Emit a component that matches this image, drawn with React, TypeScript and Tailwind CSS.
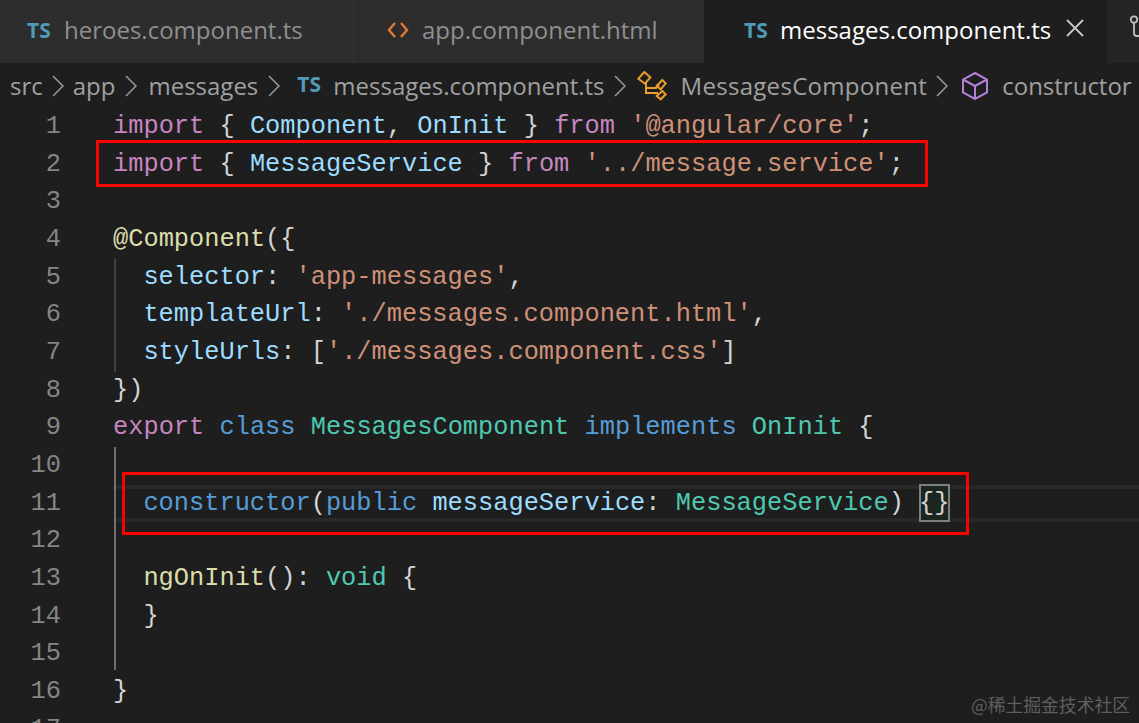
const uiFont = "font-['Open_Sans',sans-serif]";

const KW = "text-[#c586c0]";
const VAR = "text-[#9cdcfe]";
const STR = "text-[#ce9178]";
const FN = "text-[#dcdcaa]";
const CLS = "text-[#4ec9b0]";
const BLUE = "text-[#569cd6]";

function TsIcon() {
  return <span className="text-[#519aba] text-[21px] leading-none font-bold shrink-0 mb-[3px] w-[25px]">TS</span>;
}

function Chevron({ className }: { className: string }) {
  return (
    <svg width="12" height="22" viewBox="0 0 12 22" fill="none" stroke="#9a9a9a" strokeWidth="1.5" className={`shrink-0 ${className}`}>
      <path d="M1 1 L11 11 L1 21" />
    </svg>
  );
}

function T({ c, children }: { c?: string; children: React.ReactNode }) {
  return <span className={c ?? "text-[#d4d4d4]"}>{children}</span>;
}

function Row({ n, guide, indent, current, children }: { n: number; guide?: string; indent?: boolean; current?: boolean; children?: React.ReactNode }) {
  return (
    <div className="relative flex h-[37.67px]">
      <div className="w-[61px] shrink-0 text-right text-[#858585]">{n}</div>
      <div className={`ml-[52px] flex-1 whitespace-pre flex items-center ${indent ? "pl-[30.4px]" : ""} ${current ? "border-y-4 border-[#282828]" : ""}`}>
        {children}
      </div>
      {guide && <div className={`absolute left-[114px] top-0 w-[2px] ${guide}`} />}
    </div>
  );
}

const dim = "bg-[#404040] bottom-0";
const bright = "bg-[#707070] bottom-0";
const brightEnd = "bg-[#707070] bottom-[3px]";

export default function App() {
  return (
    <div className={`w-[1139px] h-[723px] overflow-hidden relative bg-[#1e1e1e] ${uiFont}`}>
      {/* tabs */}
      <div className="flex h-[63px] text-[24px] leading-none">
        <div className="w-[359px] flex items-center pl-[27px] shrink-0 bg-[#2d2d2d] text-[#8f8f8f] border-r border-[#252525]">
          <TsIcon />
          <span className="ml-[12px] mb-[3px]">heroes.component.ts</span>
        </div>
        <div className="w-[345px] flex items-center pl-[27px] shrink-0 bg-[#2d2d2d] text-[#8f8f8f]">
          <svg width="24" height="20" viewBox="0 0 24 20" fill="none" stroke="#e37933" strokeWidth="2.4" className="shrink-0 mb-[3px]">
            <path d="M9 3 L3 10 L9 17" />
            <path d="M15 3 L21 10 L15 17" />
          </svg>
          <span className="ml-[12px] mb-[3px]">app.component.html</span>
        </div>
        <div className="w-[403px] flex items-center pl-[40px] shrink-0 bg-[#1e1e1e] text-white">
          <TsIcon />
          <span className="ml-[11px] mb-[3px]">messages.component.ts</span>
          <svg width="18" height="18" viewBox="0 0 18 18" fill="none" stroke="#c8c8c8" strokeWidth="1.8" className="ml-[15px] mb-[8px] shrink-0">
            <path d="M1 1 L17 17 M17 1 L1 17" />
          </svg>
        </div>
        <div className="flex-1 flex pl-[22px] pt-[15px] bg-[#252525]">
          <svg width="14" height="34" viewBox="0 0 14 34" fill="none" stroke="#c0c0c0" strokeWidth="1.8" className="shrink-0">
            <circle cx="5" cy="4.5" r="3.2" />
            <path d="M5 8 V18 Q5 21 8 21 H14" />
          </svg>
        </div>
      </div>

      {/* breadcrumbs */}
      <div className="flex items-center h-[45px] pl-[10px] text-[#a0a0a0] text-[24px] whitespace-nowrap">
        <span>src</span>
        <Chevron className="ml-[9px] mr-[9px]" />
        <span>app</span>
        <Chevron className="ml-[10px] mr-[11px]" />
        <span>messages</span>
        <Chevron className="ml-[10px] mr-[17px]" />
        <TsIcon />
        <span className="ml-[11px]">messages.component.ts</span>
        <Chevron className="ml-[9px] mr-[11px]" />
        <svg width="30" height="30" viewBox="0 0 30 30" fill="none" stroke="#ee9d28" strokeWidth="2" className="shrink-0">
          <path d="M7.3 1 L13.3 6.3 L8 12.7 L1.3 7.7 Z" />
          <path d="M25.3 9 L28.7 12.3 L23.7 18.3 L19.7 15 Z" />
          <path d="M25.3 20 L28.7 23.3 L23.7 28.3 L19.7 25 Z" />
          <path d="M9 12 V22 H21 M9 17 H19 L22 14" />
        </svg>
        <span className="ml-[14px] tracking-[0.3px]">MessagesComponent</span>
        <Chevron className="ml-[9px] mr-[14px]" />
        <svg width="26" height="28" viewBox="0 0 26 28" fill="none" stroke="#b180d7" strokeWidth="2" className="shrink-0">
          <path d="M13 1 L25 7.5 V20.5 L13 27 L1 20.5 V7.5 Z" />
          <path d="M1 7.5 L13 14 L25 7.5 M13 14 V27" />
        </svg>
        <span className="ml-[14px]">constructor</span>
      </div>

      {/* code */}
      <div className="font-['Liberation_Mono',monospace] text-[25.35px] leading-[37.67px] text-[#d4d4d4]">
        <Row n={1}>
          <T c={KW}>import</T><T> {"{ "}</T><T c={VAR}>Component</T><T>, </T><T c={VAR}>OnInit</T><T>{" } "}</T><T c={KW}>from</T><T> </T><T c={STR}>'@angular/core'</T><T>;</T>
        </Row>
        <Row n={2}>
          <T c={KW}>import</T><T> {"{ "}</T><T c={VAR}>MessageService</T><T>{" } "}</T><T c={KW}>from</T><T> </T><T c={STR}>'../message.service'</T><T>;</T>
        </Row>
        <Row n={3} />
        <Row n={4}>
          <T c={FN}>@Component</T><T>{"({"}</T>
        </Row>
        <Row n={5} guide={dim} indent>
          <T c={VAR}>selector</T><T>: </T><T c={STR}>'app-messages'</T><T>,</T>
        </Row>
        <Row n={6} guide={dim} indent>
          <T c={VAR}>templateUrl</T><T>: </T><T c={STR}>'./messages.component.html'</T><T>,</T>
        </Row>
        <Row n={7} guide={dim} indent>
          <T c={VAR}>styleUrls</T><T>: [</T><T c={STR}>'./messages.component.css'</T><T>]</T>
        </Row>
        <Row n={8}>
          <T>{"})"}</T>
        </Row>
        <Row n={9}>
          <T c={KW}>export</T><T> </T><T c={BLUE}>class</T><T> </T><T c={CLS}>MessagesComponent</T><T> </T><T c={BLUE}>implements</T><T> </T><T c={CLS}>OnInit</T><T> {"{"}</T>
        </Row>
        <Row n={10} guide={bright} />
        <Row n={11} guide={bright} indent current>
          <T c={BLUE}>constructor</T><T>(</T><T c={BLUE}>public</T><T> </T><T c={VAR}>messageService</T><T>: </T><T c={CLS}>MessageService</T><T>) </T>
          <span className="outline-2 -outline-offset-2 outline-[#7f7f7f] bg-[#1b261f] h-[38px] flex items-center">{"{}"}</span>
        </Row>
        <Row n={12} guide={bright} />
        <Row n={13} guide={bright} indent>
          <T c={FN}>ngOnInit</T><T>(): </T><T c={CLS}>void</T><T> {"{"}</T>
        </Row>
        <Row n={14} guide={bright} indent>
          <T>{"}"}</T>
        </Row>
        <Row n={15} guide={brightEnd} />
        <Row n={16}>
          <T>{"}"}</T>
        </Row>
        <Row n={17} />
      </div>

      {/* annotation boxes */}
      <div className="absolute left-[96px] top-[140px] w-[832px] h-[47px] border-[3px] border-[#ff0000]" />
      <div className="absolute left-[122px] top-[472px] w-[847px] h-[63px] border-[3px] border-[#ff0000]" />

      {/* watermark */}
      <div className="absolute right-[9px] top-[692px] text-[#5f5f5f] text-[17.8px] leading-[24px] font-['Noto_Sans_CJK_SC',sans-serif]">@稀土掘金技术社区</div>
    </div>
  );
}
